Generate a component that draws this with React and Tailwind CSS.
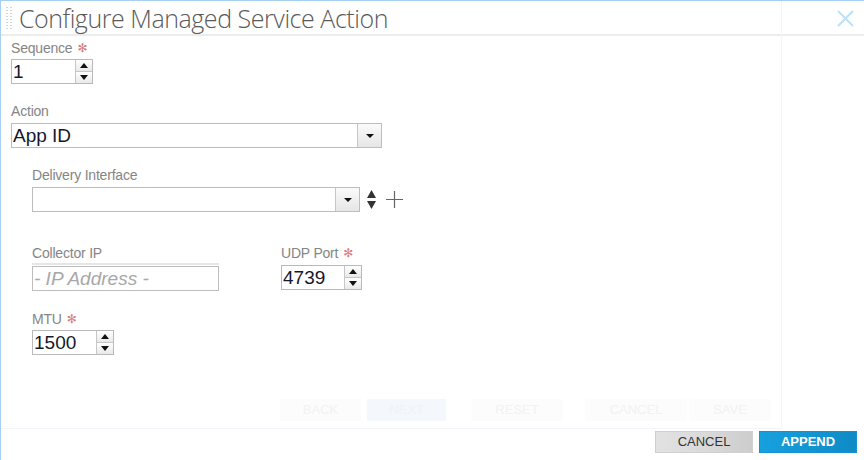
import React from 'react';

const FONT = "font-['Liberation_Sans',Arial,sans-serif]";

const Label = ({ text, required }) => (
  <div className="h-4 flex items-center text-[14px] leading-4 text-[#858585] tracking-[-0.2px]">
    {text}
    {required && (
      <span className="ml-[5px] text-[12px] leading-3 text-[#d77a7a] font-['DejaVu_Sans',sans-serif]">✻</span>
    )}
  </div>
);

const Triangle = ({ up, w = 8, h = 5, color = '#111' }) => (
  <svg width={w} height={h} viewBox={`0 0 ${w} ${h}`}>
    <path d={up ? `M0 ${h} L${w / 2} 0 L${w} ${h} Z` : `M0 0 L${w} 0 L${w / 2} ${h} Z`} fill={color} />
  </svg>
);

const Spinner = ({ value, width }) => (
  <div className="flex h-[25px] border border-[#b9b9b9] bg-white" style={{ width }}>
    <div className="flex-1 pl-[1px] text-[19px] leading-[23px] text-[#14182a]">{value}</div>
    <div className="w-[17px] flex flex-col border-l border-[#c6c6c6]">
      <div className="flex-1 flex items-center justify-center bg-gradient-to-b from-white to-[#e9e9e9] border-b border-[#c6c6c6]">
        <Triangle up />
      </div>
      <div className="flex-1 flex items-center justify-center bg-gradient-to-b from-white to-[#e9e9e9]">
        <Triangle />
      </div>
    </div>
  </div>
);

const Select = ({ value, width }) => (
  <div className="flex h-[25px] border border-[#bdbdbd] bg-white" style={{ width }}>
    <div className="flex-1 pl-[1px] text-[19px] leading-[23px] text-[#14182a]">{value}</div>
    <div className="w-[24px] flex items-center justify-center border-l border-[#c6c6c6] bg-gradient-to-b from-[#fafafa] to-[#e6e6e6]">
      <Triangle w={8} h={4} />
    </div>
  </div>
);

const GhostButton = ({ label, w, tint }) => (
  <div
    className={`h-[22px] flex items-center justify-center text-[13px] text-[#f2f2f2] ${tint ? 'bg-[#f4f8fc]' : 'bg-[#fcfcfc]'}`}
    style={{ width: w }}
  >
    {label}
  </div>
);

export default function App() {
  return (
    <div className={`${FONT} relative w-[864px] h-[460px] overflow-hidden bg-white border-l border-t border-[#a6cff0] flex flex-col`}>
      {/* ghost outline of the dialog underneath */}
      <div className="absolute left-0 top-0 w-[781px] h-[428px] border-r border-b border-[#f2f6fa] pointer-events-none" />

      {/* Header */}
      <div className="h-[35px] shrink-0 flex items-center border-b-2 border-[#ececec] bg-white">
        <div className="ml-[5px] grid grid-cols-2 gap-x-[2px] gap-y-[2px]">
          {Array.from({ length: 16 }).map((_, i) => (
            <div key={i} className="w-[2px] h-[1px] bg-[#d4d4d4]" />
          ))}
        </div>
        <div className="ml-[7px] text-[25px] leading-[30px] text-[#5a5a5a] tracking-[-0.45px] font-['Open_Sans',sans-serif] font-light">
          Configure Managed Service Action
        </div>
        <div className="ml-auto mr-[10px] mt-[2px]">
          <svg width="17" height="17" viewBox="0 0 17 17">
            <path d="M1 1 L16 16 M16 1 L1 16" stroke="#bfe0f6" strokeWidth="2" />
          </svg>
        </div>
      </div>

      {/* Body */}
      <div className="flex-1 flex flex-col">
        <div className="pl-[10px] pt-[4px]">
          <Label text="Sequence" required />
          <div className="mt-[3px]">
            <Spinner value="1" width={82} />
          </div>

          <div className="mt-[19px]">
            <Label text="Action" />
          </div>
          <div className="mt-[4px]">
            <Select value="App ID" width={371} />
          </div>

          <div className="pl-[21px]">
            <div className="mt-[19px]">
              <Label text="Delivery Interface" />
            </div>
            <div className="mt-[4px] flex items-center">
              <Select value="" width={328} />
              <div className="ml-[7px] flex flex-col gap-[3px]">
                <Triangle up w={9} h={8} color="#333" />
                <Triangle w={9} h={8} color="#333" />
              </div>
              <svg className="ml-[9px]" width="19" height="19" viewBox="0 0 19 19">
                <path d="M9.5 1 V18 M1 9.5 H18" stroke="#666" strokeWidth="1.2" />
              </svg>
            </div>

            <div className="mt-[33px] flex">
              <div className="w-[249px]">
                <Label text="Collector IP" />
                <div className="mt-[2px] w-[187px] h-[2px] border-t border-b border-[#e6e6e6]" />
                <div className="mt-[1px] w-[187px] h-[25px] border border-[#bdbdbd] bg-white text-[19px] leading-[23px] italic text-[#a8a8a8] pl-[1px]">
                  - IP Address -
                </div>
              </div>
              <div>
                <Label text="UDP Port" required />
                <div className="mt-[4px]">
                  <Spinner value="4739" width={81} />
                </div>
              </div>
            </div>

            <div className="mt-[20px]">
              <Label text="MTU" required />
            </div>
            <div className="mt-[3px]">
              <Spinner value="1500" width={82} />
            </div>
          </div>
        </div>

        {/* ghost button row from dialog underneath */}
        <div className="mt-[44px] ml-[279px] flex items-center">
          <GhostButton label="BACK" w={81} />
          <div className="w-[6px]" />
          <GhostButton label="NEXT" w={79} tint />
          <div className="w-[25px]" />
          <GhostButton label="RESET" w={92} />
          <div className="w-[22px]" />
          <GhostButton label="CANCEL" w={102} />
          <div className="w-[2px]" />
          <GhostButton label="SAVE" w={82} />
        </div>
      </div>

      {/* Footer */}
      <div className="h-[29px] shrink-0 flex items-start justify-end gap-[6px] pr-[7px]">
        <button className="w-[98px] h-[22px] text-[13px] text-[#333] bg-gradient-to-r from-[#e2e2e2] via-[#dadada] to-[#cdcdcd] border border-[#d0d0d0]">
          CANCEL
        </button>
        <button className="w-[98px] h-[22px] text-[13px] font-bold text-white bg-gradient-to-r from-[#17a0de] to-[#0f8bc6] border border-[#1592cf]">
          APPEND
        </button>
      </div>
    </div>
  );
}
